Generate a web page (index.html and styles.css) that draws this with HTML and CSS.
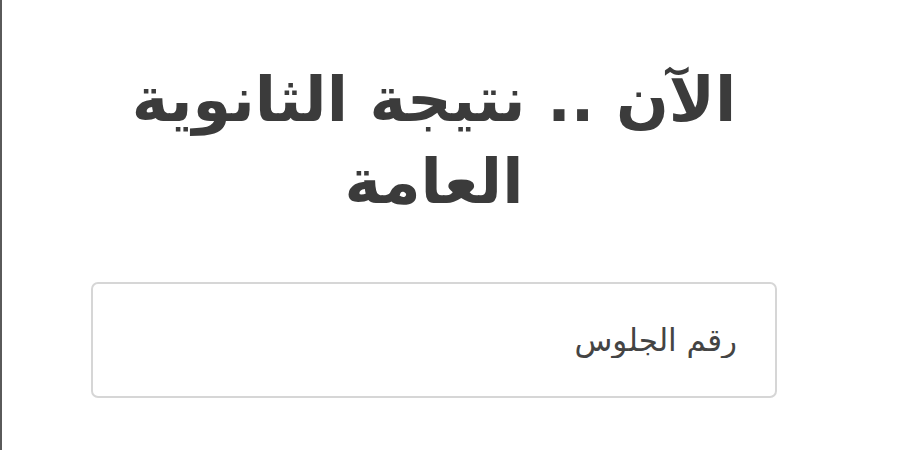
FILE: index.html
```html
<!DOCTYPE html>
<html lang="ar" dir="rtl">
<head>
    <meta charset="UTF-8">
    <meta name="viewport" content="width=device-width, initial-scale=1.0">
    <title>نتيجة الثانوية العامة</title>
    <link rel="stylesheet" href="styles.css">
</head>
<body>
    <div class="page">
        <div class="result-box">
            <h1 class="headline">الآن .. نتيجة الثانوية العامة</h1>
            <input class="seat-input" type="text" placeholder="رقم الجلوس">
        </div>
    </div>
</body>
</html>
```

FILE: styles.css
```css
* {
    margin: 0;
    padding: 0;
    box-sizing: border-box;
}

body {
    background: #fff;
    font-family: 'DejaVu Sans', 'Noto Sans', sans-serif;
    color: #3b3b3b;
}

.page {
    height: 450px;
    border-left: 2px solid #5a5a5a;
    display: flex;
}

.result-box {
    width: 686px;
    margin-right: 123px;
    padding-top: 59px;
    display: flex;
    flex-direction: column;
}

.headline {
    font-size: 62px;
    line-height: 82px;
    font-weight: bold;
    text-align: center;
    padding: 0 30px;
    color: #3b3b3b;
}

.seat-input {
    margin-top: 59px;
    height: 116px;
    border: 2px solid #d6d6d6;
    border-radius: 7px;
    padding: 0 38px;
    font-family: inherit;
    font-size: 31px;
    color: #444;
    direction: rtl;
    outline: none;
}

.seat-input::placeholder {
    color: #444;
}
```
